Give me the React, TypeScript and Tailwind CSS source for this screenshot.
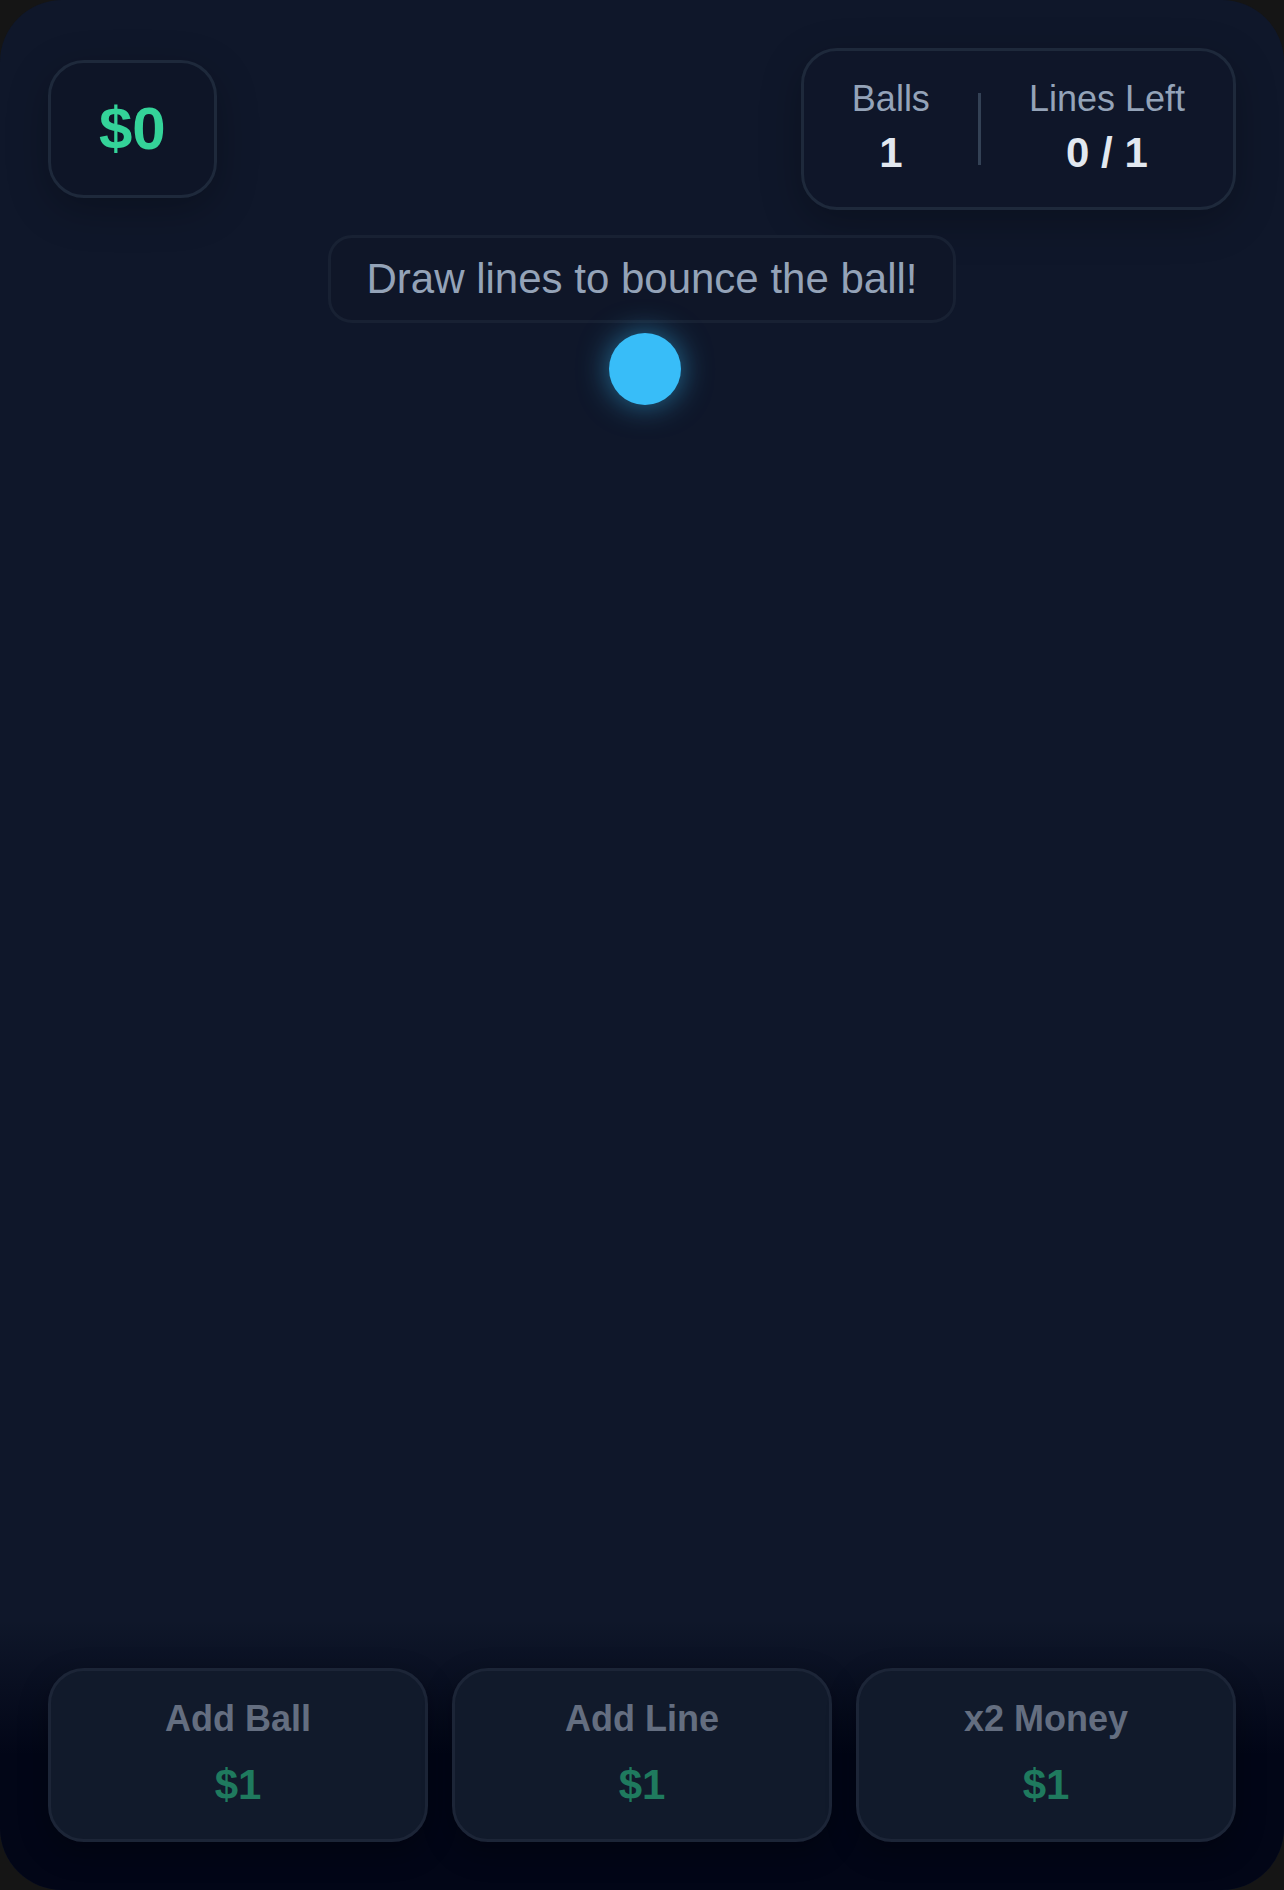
import React from "react"

const upgrades = [
    { label: "Add Ball", cost: 1 },
    { label: "Add Line", cost: 1 },
    { label: "x2 Money", cost: 1 },
]

export default function App() {
    return (
        <div
            className="w-[1284px] h-[1890px] bg-[#151515]"
            style={{ fontFamily: '"Liberation Sans", Arial, sans-serif' }}
        >
            <div className="relative flex flex-col h-full rounded-[62px] overflow-hidden bg-[#0f172a]">
                {/* top bar */}
                <header className="flex items-center justify-between px-12 pt-12">
                    <div className="rounded-[36px] border-[3px] border-[#1e293b] bg-[#0e1527] px-12 py-6 shadow-[0_12px_40px_rgba(0,0,0,0.25)]">
                        <span className="block text-6xl leading-[84px] font-bold text-[#34d399]">$0</span>
                    </div>

                    <div className="flex items-center gap-12 rounded-[36px] border-[3px] border-[#1e293b] bg-[#0f1629] px-12 py-6 shadow-[0_12px_40px_rgba(0,0,0,0.25)]">
                        <div className="flex flex-col items-center">
                            <span className="text-4xl leading-[48px] text-[#94a3b8]">Balls</span>
                            <span className="text-[42px] leading-[60px] font-bold text-[#e2e8f0]">1</span>
                        </div>
                        <div className="w-[3px] h-[72px] bg-[#334155]" />
                        <div className="flex flex-col items-center">
                            <span className="text-4xl leading-[48px] text-[#94a3b8]">Lines Left</span>
                            <span className="text-[42px] leading-[60px] font-bold text-[#e2e8f0]">0 / 1</span>
                        </div>
                    </div>
                </header>

                {/* hint */}
                <div className="flex justify-center mt-[25px]">
                    <div className="rounded-[24px] border-[3px] border-[#182133] bg-[#0f1628] px-9 py-[11px] text-[42px] leading-[60px] text-[#94a3b8]">
                        Draw lines to bounce the ball!
                    </div>
                </div>

                {/* ball on the canvas */}
                <div className="absolute left-[609px] top-[333px] w-[72px] h-[72px] rounded-full bg-[#38bdf8] shadow-[0_0_30px_rgba(56,189,248,0.55)]" />

                <div className="flex-1" />

                {/* shop */}
                <footer className="grid grid-cols-3 gap-6 px-12 py-12 bg-gradient-to-t from-[#020617] from-50% to-transparent">
                    {upgrades.map((u) => (
                        <button
                            key={u.label}
                            className="flex flex-col items-center rounded-[36px] border-[3px] border-[#1c2537] bg-[#111a2b] py-6 shadow-[0_10px_30px_rgba(0,0,0,0.3)]"
                        >
                            <span className="text-4xl leading-[48px] font-bold text-[#646e80]">{u.label}</span>
                            <span className="mt-3 text-[42px] leading-[60px] font-bold text-[#1f7a5e]">${u.cost}</span>
                        </button>
                    ))}
                </footer>
            </div>
        </div>
    )
}
